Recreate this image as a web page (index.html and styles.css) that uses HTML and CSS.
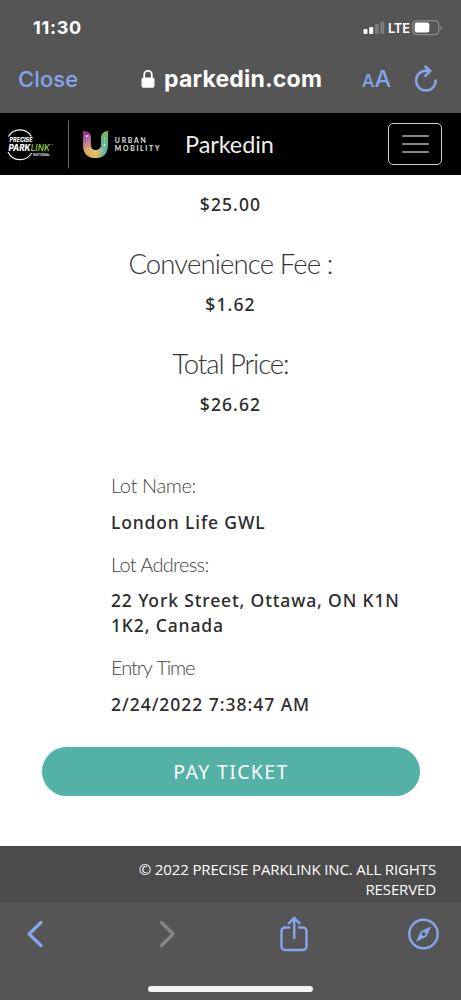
FILE: index.html
```html
<!DOCTYPE html>
<html lang="en">
<head>
<meta charset="utf-8">
<title>Parkedin</title>
<link rel="stylesheet" href="styles.css">
</head>
<body>
<div class="phone">
  <div class="status">
    <span class="clock">11:30</span>
    <div class="signals">
      <svg class="bars" width="22" height="14" viewBox="0 0 22 14">
        <rect x="0.5" y="8" width="4" height="5" rx="1" fill="#fff"/>
        <rect x="6.2" y="6" width="4" height="7" rx="1" fill="#fff"/>
        <rect x="11.8" y="3" width="4" height="10" rx="1" fill="#7b7b7b"/>
        <rect x="17.3" y="0.5" width="4" height="12.5" rx="1" fill="#7b7b7b"/>
      </svg>
      <span class="lte">LTE</span>
      <svg class="battery" width="31" height="16" viewBox="0 0 31 16">
        <rect x="0.8" y="0.8" width="26" height="13.8" rx="4" fill="none" stroke="#8c8c8c" stroke-width="1.3"/>
        <rect x="2.7" y="2.6" width="14.6" height="10" rx="2" fill="#fff"/>
        <path d="M28.3 5.4c1.8.7 1.8 3.9 0 4.6z" fill="#8c8c8c"/>
      </svg>
    </div>
  </div>
  <div class="address">
    <span class="close">Close</span>
    <div class="site">
      <svg width="14" height="20" viewBox="0 0 14 20">
        <path d="M3.2 9V5.6a3.8 3.8 0 0 1 7.6 0V9" fill="none" stroke="#fff" stroke-width="1.8"/>
        <rect x="0.5" y="8.4" width="13" height="10.4" rx="2" fill="#fff"/>
      </svg>
      <span class="domain">parkedin.com</span>
    </div>
    <span class="text-size"><span class="small-a">A</span>A</span>
    <svg class="reload" width="24" height="28" viewBox="0 0 24 28">
      <path d="M21.7 15.6A9.8 9.8 0 1 1 11.9 5.8H15.5" fill="none" stroke="#86a5ea" stroke-width="2.5" stroke-linecap="round"/>
      <path d="M11.4 1.5L16.2 6L11.4 10.8" fill="none" stroke="#86a5ea" stroke-width="2.5" stroke-linecap="round" stroke-linejoin="round"/>
    </svg>
  </div>

  <nav class="navbar">
    <svg class="logos" width="166" height="62" viewBox="0 0 166 62">
      <defs>
        <linearGradient id="left" x1="0" y1="0" x2="0" y2="1">
          <stop offset="0" stop-color="#8d2b86"/><stop offset=".35" stop-color="#a9619a"/><stop offset=".7" stop-color="#e0a65c"/><stop offset="1" stop-color="#e5b64f"/>
        </linearGradient>
        <linearGradient id="right" x1="0" y1="0" x2="0" y2="1">
          <stop offset="0" stop-color="#81b64a"/><stop offset=".45" stop-color="#55b69b"/><stop offset="1" stop-color="#48a3c8"/>
        </linearGradient>
        <linearGradient id="base" x1="0" y1="0" x2="1" y2="0">
          <stop offset="0" stop-color="#dfa264"/><stop offset=".5" stop-color="#dfbc59"/><stop offset="1" stop-color="#4cb1b0"/>
        </linearGradient>
      </defs>
      <path d="M8.5 23.5A13.3 13.3 0 0 1 31.4 23.5" fill="none" stroke="#f0f0f0" stroke-width="1.2"/>
      <path d="M8 39A13.3 13.3 0 0 0 31.6 40" fill="none" stroke="#f0f0f0" stroke-width="1.2"/>
      <g class="parklink">
        <text x="9.5" y="29.3" textLength="23" lengthAdjust="spacingAndGlyphs" fill="#fff" class="precise">PRECISE</text>
        <text x="8.5" y="37.5" textLength="22" lengthAdjust="spacingAndGlyphs" fill="#fff">PARK</text>
        <text x="30.7" y="37.5" textLength="19" lengthAdjust="spacingAndGlyphs" class="link">LINK</text>
        <text x="50" y="34.5" class="link mark">™</text>
      </g>
      <text class="national" x="33" y="42.5" textLength="17" lengthAdjust="spacingAndGlyphs">NATIONAL</text>
      <path d="M68.5 7.5V55.5" stroke="#666" stroke-width="1"/>
      <path d="M83 17.8Q89.8 18.2 91 23V31.5Q91 37 95.5 37V45Q83 45 83 31.5Z" fill="url(#left)"/>
      <path d="M108 17.8Q101.7 18.8 101 24V31.5Q101 37 95.5 37V45Q108 45 108 31.5Z" fill="url(#right)"/>
      <path d="M83.8 36Q86.5 45 95.5 45Q104.5 45 107.2 36L100 35Q98.8 37.3 95.5 37.3Q92.3 37.3 91.5 35Z" fill="url(#base)"/>
      <path d="M86.7 23V33C88 43.5 103 43.5 104.5 33V26M89 21V33C91 40.5 100 40.5 102.5 33" fill="none" stroke="#f7e5db" stroke-width=".45" opacity=".7"/>
      <circle cx="86.7" cy="23" r="1" fill="#fff"/><circle cx="104.5" cy="32" r="1" fill="#fff"/><circle cx="104.5" cy="25" r=".7" fill="#d3f5c2"/>
      <text class="urban" x="114.8" y="30" textLength="31">URBAN</text>
      <text class="urban" x="114.8" y="38" textLength="44.5">MOBILITY</text>
    </svg>
    <span class="brand">Parkedin</span>
    <div class="toggler"><i></i><i></i><i></i></div>
  </nav>

  <main class="page">
    <section class="prices">
      <p class="amount">$25.00</p>
      <h2 class="fee">Convenience Fee :</h2>
      <p class="amount">$1.62</p>
      <h2 class="total">Total Price:</h2>
      <p class="amount">$26.62</p>
    </section>
    <dl class="details">
      <dt class="lot-name">Lot Name:</dt>
      <dd>London Life GWL</dd>
      <dt class="lot-address">Lot Address:</dt>
      <dd class="street">22 York Street, Ottawa, ON K1N<br>1K2, Canada</dd>
      <dt class="entry">Entry Time</dt>
      <dd class="time">2/24/2022 7:38:47 AM</dd>
    </dl>
    <button class="pay">PAY TICKET</button>
  </main>

  <footer class="footer">© 2022 PRECISE PARKLINK INC. ALL RIGHTS<br>RESERVED</footer>

  <div class="toolbar">
    <div class="tools">
      <svg width="18" height="28" viewBox="0 0 18 28"><path d="M15 2.5L3 14L15 25.5" class="chevron"/></svg>
      <svg width="18" height="28" viewBox="0 0 18 28"><path d="M3.5 2.5L15 14L3.5 25.5" class="chevron off"/></svg>
      <svg width="28" height="36" viewBox="0 0 28 36">
        <path d="M9.3 11.5H5A3.5 3.5 0 0 0 1.5 15V30.5A3.5 3.5 0 0 0 5 34H23A3.5 3.5 0 0 0 26.5 30.5V15A3.5 3.5 0 0 0 23 11.5H19M14.2 22V2M8.8 7.3L14.2 1.8L19.6 7.3" class="line"/>
      </svg>
      <svg width="32" height="32" viewBox="0 0 32 32">
        <circle cx="15.5" cy="16" r="14.2" class="line"/>
        <path d="M23.2 8.4L18.3 18.8L8 23.7L12.9 13.3Z" fill="#86a5ea"/>
        <circle cx="15.6" cy="16" r="2" fill="#555"/>
      </svg>
    </div>
    <div class="home"></div>
  </div>
</div>
</body>
</html>
```
FILE: styles.css
```css
* { box-sizing: border-box; }
body { margin: 0; background: #fff; font-family: "Open Sans", "Noto Sans", sans-serif; color: #2b2b2b; }
p, h2, dl, dd { margin: 0; }
svg { display: block; flex: none; }
span { white-space: nowrap; }
.phone { width: 461px; height: 1000px; display: flex; flex-direction: column; overflow: hidden; }

.status { height: 56px; background: #555; color: #fff; display: flex; justify-content: space-between; padding: 0 18px 0 33px; font-family: Inter, sans-serif; }
.clock { font-size: 18px; font-weight: 700; line-height: 56px; letter-spacing: .7px; }
.signals { display: flex; align-items: center; height: 56px; }
.bars { margin: 0 3px 0 0; }
.lte { width: 21px; font-size: 13px; font-weight: 600; letter-spacing: -.3px; }
.battery { margin-left: 3px; }

.address { height: 57px; background: #555; border-bottom: 1px solid #4d4d4d; display: flex; align-items: center; padding: 0 21px 11px 18px; color: #86a5ea; font-family: Inter, sans-serif; }
.close { width: 123px; font-size: 22px; font-weight: 500; letter-spacing: .1px; }
.site { width: 221px; display: flex; align-items: center; gap: 9px; color: #fff; }
.domain { font-size: 23px; font-weight: 700; letter-spacing: .2px; }
.text-size { width: 52px; font-size: 23.5px; font-weight: 500; }
.small-a { font-size: 17.5px; }
.reload { margin-top: 1px; }

.navbar { height: 62px; flex: none; background: #000; display: flex; align-items: center; padding-right: 19px; }
.parklink { font: italic 800 8.5px Inter, sans-serif; }
.precise { font-size: 6px; }
.link { fill: #8cc63f; font-weight: 600; }
.mark { font-size: 4px; }
.national { font: 700 3.2px Inter, sans-serif; fill: #ddd; }
.urban { font: 700 6.8px Lato, sans-serif; fill: #e9e9e9; }
.brand { width: 203px; margin-left: 19px; color: #eee; font: 400 23.5px/32px Lato, sans-serif; letter-spacing: -.1px; }
.toggler { width: 54px; height: 42px; border: 1.5px solid #d0d0d0; border-radius: 5px; display: flex; flex-direction: column; justify-content: center; align-items: center; gap: 6px; }
.toggler i { width: 27px; height: 2px; background: #858585; border-radius: 1px; }

.page { height: 671px; flex: none; padding-top: 9px; }
.prices { text-align: center; }
.amount { height: 40px; line-height: 40px; margin-bottom: 20px; font-family: "Noto Sans", sans-serif; font-size: 17.5px; font-weight: 500; letter-spacing: 1.1px; }
.prices h2 { height: 40px; font: 300 27.5px/40px Lato, sans-serif; color: #333; }
.fee { letter-spacing: -.85px; }
.total { letter-spacing: -1.05px; }
.details { margin: 46px 0 0 111px; }
.details dt { height: 30px; font: 300 20px/30px Lato, sans-serif; color: #444; }
.lot-name { letter-spacing: -.35px; }
.lot-address { letter-spacing: -.65px; }
.entry { letter-spacing: -1.1px; word-spacing: 1.5px; }
.details dd { margin: 9.5px 0 14px; font-family: "Noto Sans", sans-serif; font-size: 17.5px; font-weight: 500; line-height: 25px; letter-spacing: .86px; white-space: nowrap; }
.details .time { letter-spacing: .97px; }
.pay { display: block; width: 378px; height: 49px; margin: 30.5px 0 0 42px; padding: 0; border: 0; border-radius: 25px; background: #53b1a6; color: #fff; font: 400 19.5px/49px "Noto Sans", sans-serif; letter-spacing: 1.35px; }

.footer { height: 56px; flex: none; padding: 12.5px 25px 0; background: #4b4b4b; color: #fff; text-align: right; font: 400 15px/20.5px "Open Sans", sans-serif; letter-spacing: -.13px; white-space: nowrap; }
.toolbar { height: 98px; flex: none; background: #555; display: flex; flex-direction: column; align-items: center; }
.tools { width: 100%; height: 82px; padding: 0 22px 18px 26px; display: grid; grid-template-columns: 132px 122px 128px 32px; align-items: center; }
.chevron { fill: none; stroke: #86a5ea; stroke-width: 3.3; stroke-linecap: round; stroke-linejoin: round; }
.off { stroke: #858585; }
.line { fill: none; stroke: #86a5ea; stroke-width: 2.4; stroke-linecap: round; stroke-linejoin: round; }
.home { width: 165px; height: 6px; border-radius: 3px; background: #f2f2f2; margin-top: 2px; }
```
